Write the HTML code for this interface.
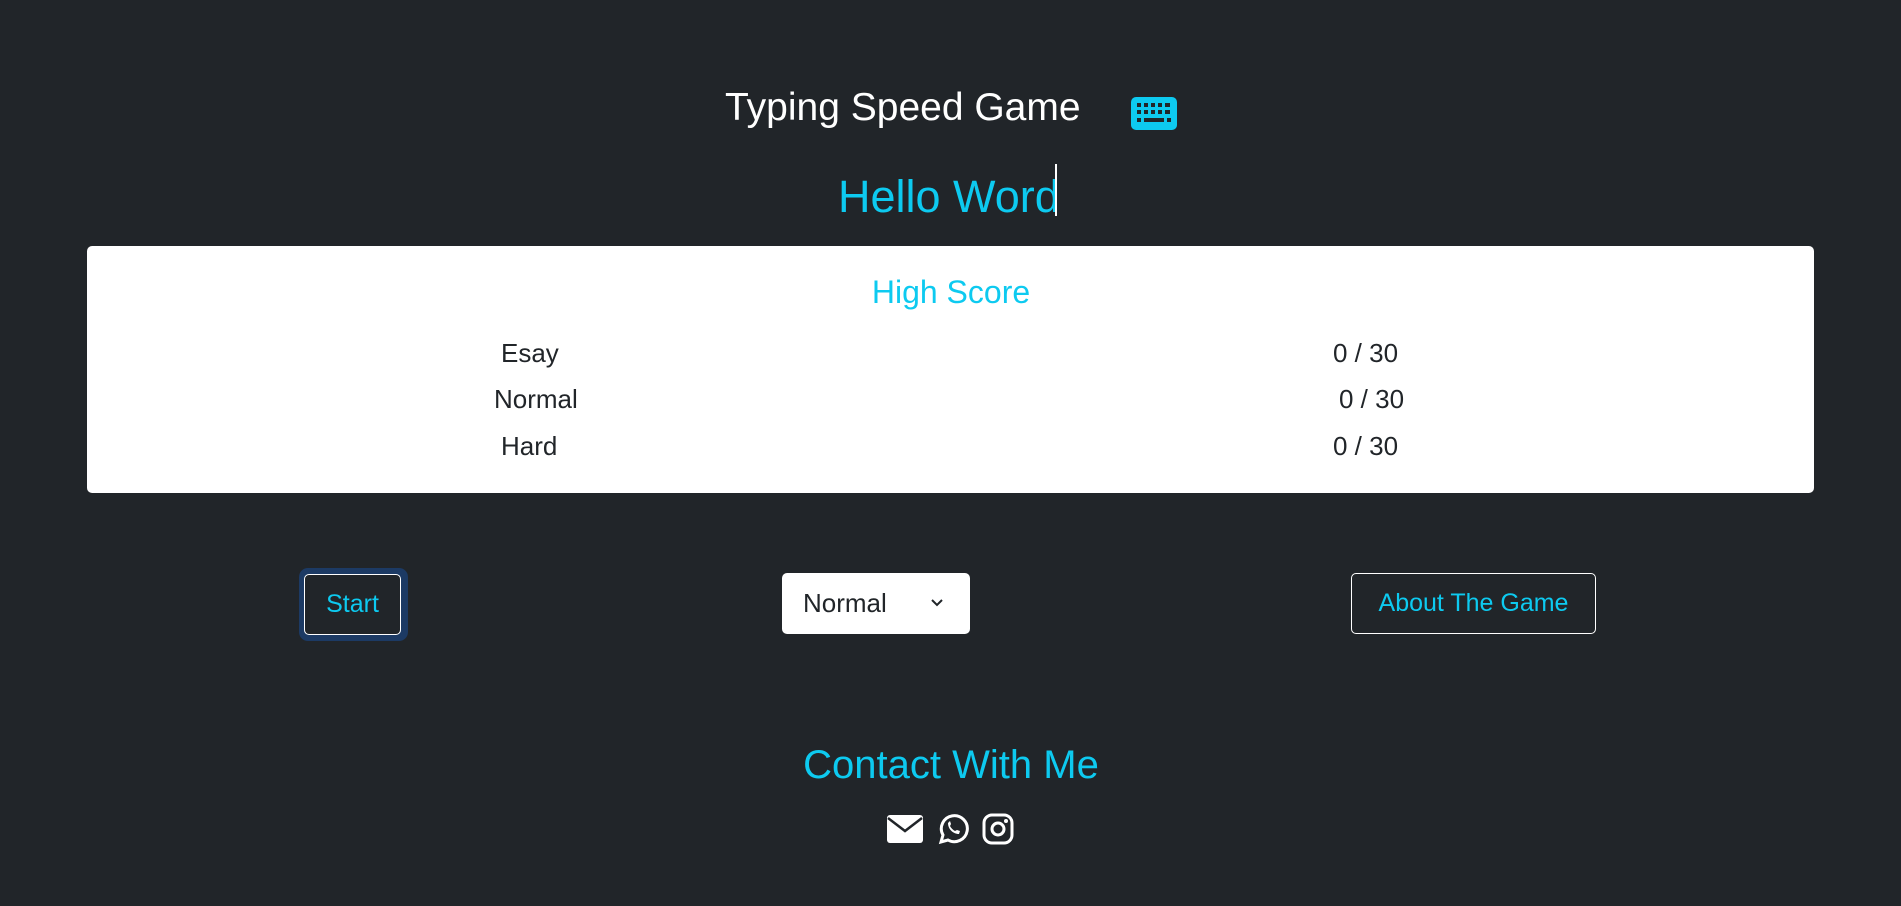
<!DOCTYPE html>
<html><head><meta charset="utf-8"><style>
body{margin:0;width:1901px;height:906px;background:#212529;font-family:"Liberation Sans",sans-serif;position:relative;overflow:hidden}
.a{position:absolute;white-space:nowrap}
.cy{color:#0dcaf0}
</style></head><body>
<div class="a" style="left:725px;top:86px;font-size:39px;color:#fff">Typing Speed Game</div>
<svg class="a" style="left:1131px;top:97px" width="46" height="33" viewBox="0 0 46 33"><rect x="0" y="0" width="46" height="33" rx="5" fill="#0dcaf0"/><g fill="#212529"><rect x="6" y="6" width="4" height="4"/><rect x="13" y="6" width="4" height="4"/><rect x="20" y="6" width="4" height="4"/><rect x="27" y="6" width="4" height="4"/><rect x="34" y="6" width="5" height="4"/><rect x="6" y="13" width="4" height="4"/><rect x="13" y="13" width="4" height="4"/><rect x="20" y="13" width="4" height="4"/><rect x="27" y="13" width="4" height="4"/><rect x="34" y="13" width="5" height="4"/><rect x="6" y="21" width="4" height="4"/><rect x="13" y="21" width="20" height="4"/><rect x="36" y="21" width="4" height="4"/></g></svg>
<div class="a cy" style="left:838px;top:171px;font-size:45px">Hello Word</div>
<div class="a" style="left:1055px;top:164px;width:2px;height:52px;background:#fff"></div>
<div class="a" style="left:87px;top:246px;width:1727px;height:247px;background:#fff;border-radius:5px"></div>
<div class="a cy" style="left:0;width:1902px;text-align:center;top:274px;font-size:32px">High Score</div>
<div class="a" style="left:501px;top:338px;font-size:26px;color:#212529">Esay</div>
<div class="a" style="left:1333px;top:338px;font-size:26px;color:#212529">0 / 30</div>
<div class="a" style="left:494px;top:384px;font-size:26px;color:#212529">Normal</div>
<div class="a" style="left:1339px;top:384px;font-size:26px;color:#212529">0 / 30</div>
<div class="a" style="left:501px;top:431px;font-size:26px;color:#212529">Hard</div>
<div class="a" style="left:1333px;top:431px;font-size:26px;color:#212529">0 / 30</div>
<div class="a" style="left:299px;top:568px;width:109px;height:73px;border-radius:9px;background:#1c3a64"></div>
<div class="a cy" style="left:304px;top:574px;width:95px;height:59px;border:1px solid #fff;border-radius:5px;background:#212529;font-size:25px;line-height:59px;text-align:center">Start</div>
<div class="a" style="left:782px;top:573px;width:188px;height:61px;background:#fff;border-radius:5px;font-size:26px;color:#212529;line-height:61px"><span style="margin-left:21px">Normal</span><svg style="position:absolute;left:148px;top:25px" width="14" height="10" viewBox="0 0 14 10"><path d="M2 2l5 5 5-5" stroke="#212529" stroke-width="2" fill="none"/></svg></div>
<div class="a cy" style="left:1351px;top:573px;width:243px;height:59px;border:1px solid #fff;border-radius:5px;font-size:25px;line-height:59px;text-align:center">About The Game</div>
<div class="a cy" style="left:0;width:1902px;text-align:center;top:743px;font-size:40px">Contact With Me</div>
<svg class="a" style="left:887px;top:815px" width="36" height="28" viewBox="0 0 36 28"><rect x="0" y="0" width="36" height="28" rx="3" fill="#fff"/><path d="M1 3l17 13 17-13" stroke="#212529" stroke-width="2.5" fill="none"/></svg>
<svg class="a" style="left:937px;top:813px" width="32" height="32" viewBox="0 0 32 32"><path d="M4 29l2-7a13 13 0 1 1 5 5z" stroke="#fff" stroke-width="3" fill="none"/><path d="M11 10c0 6 5 11 11 11l1-3-3-1-2 1c-2-1-4-3-5-5l1-2-1-3z" fill="#fff"/></svg>
<svg class="a" style="left:982px;top:813px" width="32" height="32" viewBox="0 0 32 32"><rect x="2" y="2" width="28" height="28" rx="8" stroke="#fff" stroke-width="3" fill="none"/><circle cx="16" cy="16" r="6" stroke="#fff" stroke-width="3" fill="none"/><circle cx="24" cy="8" r="2" fill="#fff"/></svg>
</body></html>
